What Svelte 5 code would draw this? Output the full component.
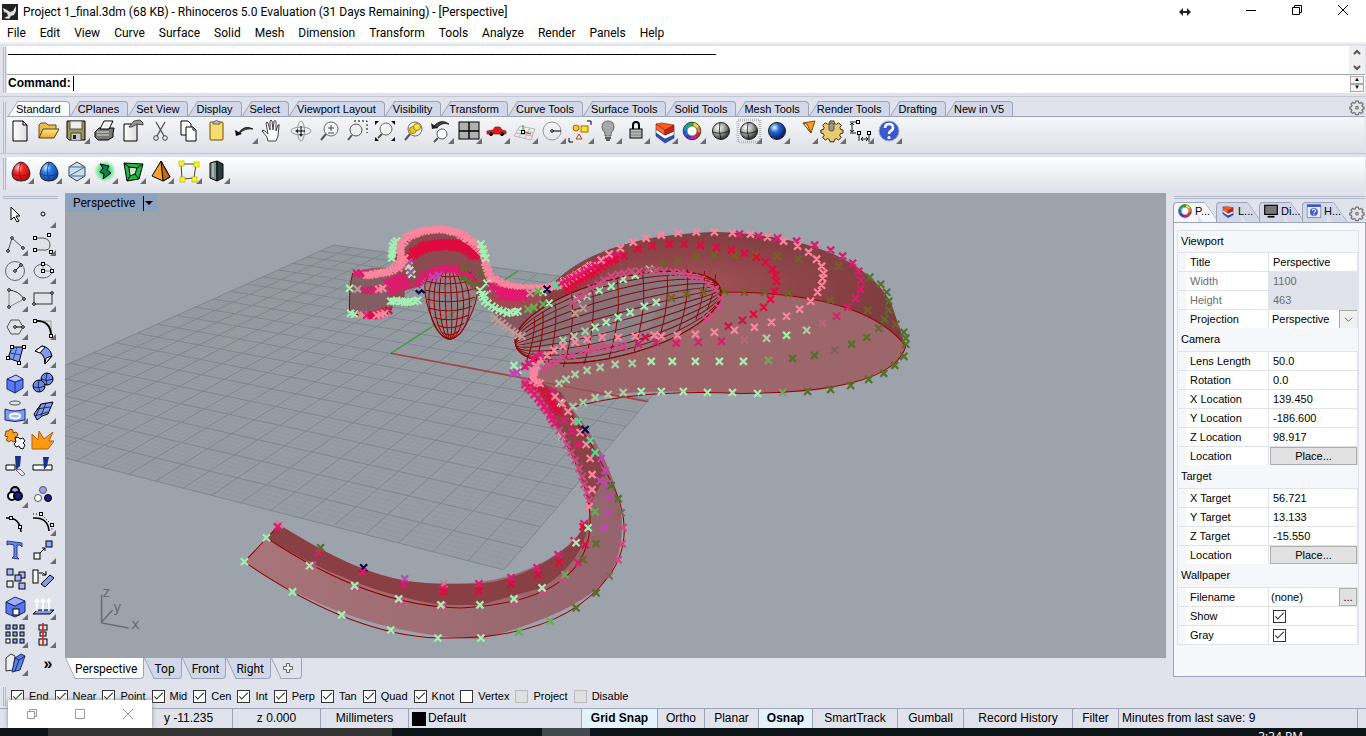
<script lang="ts">
  type Pt = [number, number];

  const menus = ['File', 'Edit', 'View', 'Curve', 'Surface', 'Solid', 'Mesh', 'Dimension', 'Transform', 'Tools', 'Analyze', 'Render', 'Panels', 'Help'];
  const toolTabs = ['Standard', 'CPlanes', 'Set View', 'Display', 'Select', 'Viewport Layout', 'Visibility', 'Transform', 'Curve Tools', 'Surface Tools', 'Solid Tools', 'Mesh Tools', 'Render Tools', 'Drafting', 'New in V5'];
  const viewTabs = ['Perspective', 'Top', 'Front', 'Right'];

  let activeTool = $state('Standard');
  let activeView = $state('Perspective');
  let command = $state('');

  let snaps = $state([
    ...['End', 'Near', 'Point', 'Mid', 'Cen', 'Int', 'Perp', 'Tan', 'Quad', 'Knot'].map((name) => ({ name, on: true, off: false })),
    { name: 'Vertex', on: false, off: false },
    { name: 'Project', on: false, off: true },
    { name: 'Disable', on: false, off: true },
  ]);

  const sections = [
    {
      title: 'Viewport',
      rows: [
        { label: 'Title', kind: 'text', value: 'Perspective' },
        { label: 'Width', kind: 'fixed', value: '1100' },
        { label: 'Height', kind: 'fixed', value: '463' },
        { label: 'Projection', kind: 'select', value: 'Perspective' },
      ],
    },
    {
      title: 'Camera',
      rows: [
        { label: 'Lens Length', kind: 'text', value: '50.0' },
        { label: 'Rotation', kind: 'text', value: '0.0' },
        { label: 'X Location', kind: 'text', value: '139.450' },
        { label: 'Y Location', kind: 'text', value: '-186.600' },
        { label: 'Z Location', kind: 'text', value: '98.917' },
        { label: 'Location', kind: 'button', value: 'Place...' },
      ],
    },
    {
      title: 'Target',
      rows: [
        { label: 'X Target', kind: 'text', value: '56.721' },
        { label: 'Y Target', kind: 'text', value: '13.133' },
        { label: 'Z Target', kind: 'text', value: '-15.550' },
        { label: 'Location', kind: 'button', value: 'Place...' },
      ],
    },
    {
      title: 'Wallpaper',
      rows: [
        { label: 'Filename', kind: 'file', value: '(none)' },
        { label: 'Show', kind: 'check', value: '' },
        { label: 'Gray', kind: 'check', value: '' },
      ],
    },
  ];

  const statusCells = [
    { text: 'Grid Snap', w: 76, on: true },
    { text: 'Ortho', w: 47, on: false },
    { text: 'Planar', w: 54, on: false },
    { text: 'Osnap', w: 54, on: true },
    { text: 'SmartTrack', w: 85, on: false },
    { text: 'Gumball', w: 66, on: false },
    { text: 'Record History', w: 109, on: false },
    { text: 'Filter', w: 46, on: false },
  ];

  // ---- icons, each on a 28 x 28 cell ----
  const h = (x: number, y: number, s = 3) => `<rect x="${x - s / 2}" y="${y - s / 2}" width="${s}" height="${s}" fill="#fff"/>`;
  const dot = (x: number, y: number) => `<circle cx="${x}" cy="${y}" r="1.3" fill="#fff"/>`;
  const p = (d: string, attrs = '') => `<path d="${d}" ${attrs}/>`;
  const lens = '<circle cx="16" cy="12" r="7" fill="#f4f4f4" stroke="#666"/><path d="M11 17l-5 6" stroke="#555" stroke-width="2"/>';
  const wheel = (cx: number, cy: number, r: number) => {
    const cols = ['#e8e020', '#f08020', '#e02020', '#c020a0', '#5030c0', '#2060e0', '#10a0b0', '#20b040'];
    let out = '';
    cols.forEach((c, i) => {
      const a = (i * Math.PI) / 4 - 1.4;
      const b = a + Math.PI / 4 + 0.05;
      out += `<path d="M${cx + r * Math.cos(a)} ${cy + r * Math.sin(a)}A${r} ${r} 0 0 1 ${cx + r * Math.cos(b)} ${cy + r * Math.sin(b)}" stroke="${c}" stroke-width="${r * 0.5}"/>`;
    });
    return out + `<circle cx="${cx}" cy="${cy}" r="${r * 0.72}" fill="#fff" stroke="#333" stroke-width=".7"/><circle cx="${cx}" cy="${cy}" r="${r * 1.26}" stroke="#222" stroke-width=".8"/>`;
  };
  const ball = (fill: string) => `<circle cx="14" cy="14" r="8.500" fill="url(#${fill})" stroke="#222"/>`;
  const meridians = p('M6 15q8 3 16-1M13 6q-2 8 1 16', 'stroke-width=".7"');
  const layers = p('M5 16l9 6 9-4v3l-9 5-9-7z', 'fill="#2850c8" stroke="#122a80" stroke-width=".6"') + p('M5 12l9 6 9-4v4l-9 4-9-6z', 'fill="#fff" stroke="#333" stroke-width=".6"') + p('M5 7v5l9 6v-5z', 'fill="#ff6a30" stroke="#7a1a10" stroke-width=".6"') + p('M14 13v5l9-4V8z', 'fill="#c8201c" stroke="#7a1a10" stroke-width=".6"') + p('M5 7l6-1 12 2-9 5z', 'fill="#ff5a20" stroke="#7a1a10" stroke-width=".6"');
  const helpBall = '<circle cx="14" cy="14" r="10" fill="#3858cc" stroke="#9aaae8"/>' + p('M10 11q0-4 4-4t4 3.500q0 2.500-2.500 3.700-1.500.8-1.500 2.800', 'stroke="#fff" stroke-width="2.600"') + '<circle cx="14" cy="20.500" r="1.600" fill="#fff" stroke="none"/>';
  const gearPath = 'M12 5h4l.5 2.500 2 .8 2.200-1.500 2.600 2.700-1.400 2.100.8 2 2.300.4v3l-2.500.6-.8 1.800 1.500 2.200-2.700 2.400-2-1.400-2 .9-.5 2.300h-4l-.5-2.300-2-.9-2.200 1.400-2.600-2.500 1.400-2.100-.8-1.900-2.400-.5v-3l2.400-.4.9-2-1.500-2.200 2.700-2.700 2.100 1.500 2-.8z';

  const standard = [
    { n: 'New', a: p('M6 4h10l4 4v16H6z', 'fill="url(#paper)"') + p('M16 4v4h4') },
    { n: 'Open', a: p('M4 21V8l2-2h5l2 2h8v4', 'fill="#e8c050" stroke="#6a5010"') + p('M4 21l4-9h16l-5 9z', 'fill="url(#gold)" stroke="#5a4208"') },
    { n: 'Save', f: 1, a: p('M4 4h18v19H6l-2-2z', 'fill="#9c9458"') + '<rect x="7" y="4" width="12" height="8" fill="#eee" stroke="#555"/>' + p('M8 23v-7h10v7', 'fill="#c8c8c8" stroke="#444"') + '<rect x="10" y="18" width="3" height="4" fill="#222" stroke="none"/>' },
    { n: 'Print', a: p('M4 15l4-4h15l-1 5v4l-5 3H7l-3-3z', 'fill="#777"') + p('M9 12l4-8h9l-4 8z', 'fill="#fff"') + p('M6 15h12M6 18h12M14 7l4 0M13 9h4', 'stroke="#ddd"') },
    { n: 'Properties', a: p('M5 7h13v17H5z', 'fill="url(#paper)"') + p('M10 10l5-6 6-1 3 3v2l-6-1-5 3z', 'fill="#999" stroke="#444"') },
    { n: 'Cut', a: p('M9 5l8 14M18 5l-8 14', 'stroke="#555" stroke-width="1.400"') + '<circle cx="9" cy="21" r="2.300" stroke="#444"/><circle cx="18" cy="21" r="2.300" stroke="#444"/>' },
    { n: 'Copy', a: p('M6 4h7l3 3v11H6z', 'fill="#fff"') + p('M11 10h7l3 3v11H11z', 'fill="#fff"') + p('M18 10v3h3') },
    { n: 'Paste', a: '<rect x="7" y="5" width="13" height="18" rx="1" fill="#f4dc70" stroke="#6a5408"/>' + p('M10 7V5q3.500-3 7 0v2z', 'fill="#bbb" stroke="#666"') },
    { n: 'Undo', f: 1, a: p('M4 13l1 6 6-2z', 'fill="#000" stroke="none"') + p('M7 17q6-10 15-5-8-1-13 4z', 'fill="#444" stroke-width=".7"') },
    { n: 'Pan', a: p('M9 24l-1-4-5-6q0-2 3 0l3 3-2-11q1-2 2 0l2 7V4q1-2 2 0l1 9 1-9q2-1 2 1l0 9 2-6q2-1 1 1l-1 10-2 5z', 'fill="#fff" stroke="#444"') },
    { n: 'Rotate', a: '<ellipse cx="14" cy="14" rx="10" ry="4" stroke="#999"/><ellipse cx="14" cy="14" rx="3.500" ry="10" stroke="#999"/>' + p('M14 9v9M10 14h8') + p('M8 14l3-2v4zM14 20l-2-3h4z', 'fill="#222" stroke="none"') },
    { n: 'Zoom', a: lens + p('M13 11h6M16 8v6M13 16h6', 'stroke="#444"') },
    { n: 'Zoom Window', a: p('M11 4h13v12', 'stroke-dasharray="2 2"') + '<circle cx="13" cy="13" r="6" fill="#eee" stroke="#555"/><path d="M9 18l-4 5" stroke="#555" stroke-width="2"/>' },
    { n: 'Zoom Extents', a: '<circle cx="15" cy="12" r="6" fill="#f4f4f4" stroke="#666"/><path d="M11 17l-4 4" stroke="#555" stroke-width="2"/>' + p('M4 8V4h4zM20 4h4v4zM24 20v4h-4zM4 20v4h4z', 'fill="#000" stroke="none"') },
    { n: 'Zoom Selected', a: lens + '<circle cx="14" cy="13" r="3.500" fill="#e8c820" stroke="#a08000"/><circle cx="18" cy="10" r="3.500" fill="#f8e040" stroke="#a08000"/>' },
    { n: 'Undo View', f: 1, a: '<circle cx="15" cy="17" r="5" fill="#fff" stroke="#555"/><path d="M11 21l-4 4" stroke="#555" stroke-width="2"/>' + p('M4 6l1 6 6-1z', 'fill="#222" stroke="none"') + p('M7 9q7-8 15-2-8-2-12 4z', 'fill="#444" stroke-width=".7"') },
    { n: '4 View', f: 1, a: '<rect x="4" y="5" width="20" height="17" fill="#b0b0b0"/>' + p('M14 5v17M4 14h20', 'stroke-width="1.400"') },
    { n: 'Set View', f: 1, a: p('M4 17v-3l6-1 2-3h5l2 3 4 1v3z', 'fill="#e01818" stroke="#a01010" stroke-width=".7"') + '<circle cx="8" cy="17" r="1.600" fill="#222"/><circle cx="19" cy="17" r="1.600" fill="#222"/>' },
    { n: 'CPlane', f: 1, a: p('M3 19l6-10 15 3-4 11zM5 16l16 3M7 13l15 3M8 20l6-10M14 21l5-10', 'stroke="#aaa" stroke-width=".8"') + p('M12 15v-7', 'stroke="#2a2"') + p('M12 15l8 2', 'stroke="#d22"') + h(12, 15) },
    { n: 'Circle', f: 1, a: '<circle cx="13" cy="14" r="9" stroke="#999"/>' + p('M13 14h9') + dot(13, 14) },
    { n: 'Select', f: 1, a: '<circle cx="9" cy="11" r="3" fill="#ffc820" stroke="#b06000"/><rect x="14" y="9" width="7" height="6" fill="#ffe820" stroke="#b06000"/>' + p('M12 17l-3 5h6z', 'stroke="#b04010"') + p('M20 4h4v4M2 21v4h4') },
    { n: 'Light', f: 1, a: p('M7 10q0-6 6-6t6 6q0 3-3 6v3h-6v-3q-3-3-3-6z', 'fill="#a8a8a8" stroke="#666"') + p('M10 21h6M11 23h4', 'stroke="#333" stroke-width="1.500"') },
    { n: 'Lock', f: 1, a: p('M10 12V8q0-3 3-3t3 3v4', 'stroke-width="2"') + '<rect x="7" y="12" width="12" height="9" fill="#bbb"/>' + p('M8 15h10M8 18h10', 'stroke="#777"') },
    { n: 'Layers', f: 1, a: layers },
    { n: 'Color', f: 1, a: wheel(13, 14, 7) },
    { n: 'Shade', a: ball('steel') + meridians },
    { n: 'Ghosted', f: 1, a: '<rect x="3" y="3" width="22" height="22" stroke="#bbb" stroke-dasharray="1 1" stroke-width="3"/>' + ball('steel') + meridians },
    { n: 'Render', f: 1, a: ball('blue') },
    { n: 'Spotlight', f: 1, a: p('M12 6l12-2-4 12z', 'fill="#ff9a20" stroke="#7a5010"') + p('M12 6l4 1 4 9z', 'fill="#fff0c0" stroke="#7a5010"') },
    { n: 'Options', f: 1, a: `<g transform="translate(-1 -1)">${p(gearPath, 'fill="#eacb70" stroke="#3a2a08"')}<rect x="11" y="7" width="5" height="8" rx="2" fill="#999" stroke="#555"/></g>` },
    { n: 'Dimension', f: 1, a: p('M3 5h9M3 16h6M5 7v7M3 8l2-2 2 2M3 13l2 2 2-2M12 16v8M22 16v9M14 22h7M16 20l-2 2 2 2M19 20l2 2-2 2', 'stroke-width=".9"') + h(11, 5) + h(12, 16) + h(22, 16) },
    { n: 'Help', f: 1, a: helpBall },
  ];

  const egg = (fill: string, line: string) => p('M14 5q7 1 9 11 0 8-9 8t-9-8q2-10 9-11z', `fill="url(#${fill})" stroke="#222"`) + p('M6 17q8 4 16 0M14 6q-4 9 1 17', `stroke="${line}" stroke-width=".7"`);
  const extras = [
    { n: 'Red', a: egg('red', '#900') },
    { n: 'Blue', a: egg('sky', '#036') },
    { n: 'Hex', a: p('M14 5l8 5v9l-8 5-8-5v-9z', 'fill="#c8e0f0" stroke="#345"') + p('M6 10h16M6 19l16-9M6 19h16', 'stroke="#567"') },
    { n: 'Glow', a: '<circle cx="14" cy="14" r="11" fill="url(#glow)" stroke="none"/>' + p('M9 7l9 2-2 4 4 3-8 6 1-5-4-2 3-4z', 'fill="#1a7a50"') },
    { n: 'Green', a: p('M5 6l19 1-4 15-12 2z', 'fill="#20b840"') + p('M10 10l8 1-2 6-5 2z', 'fill="#c8ecc8"') + p('M5 6l5 4M24 7l-6 4M20 22l-4-5M8 24l3-5') },
    { n: 'Pyramid', a: p('M14 4l9 16-7 4-11-5z', 'fill="#f8a030"') + p('M14 4l2 20 7-4z', 'fill="#c06810"') },
    { n: 'Cage', a: p('M6 7l15 0-2 14-12 1z', 'stroke="#444"') + [[6, 6], [21, 7], [19, 22], [7, 22]].map(([x, y]) => `<rect x="${x - 2}" y="${y - 2}" width="5" height="5" fill="#ff0" stroke="#b8a000" stroke-width=".6"/>`).join('') },
    { n: 'Box', a: p('M7 6l7-2v20l-7-3z', 'fill="#7a8c8e"') + p('M14 4l6 3v14l-6 3z', 'fill="#2a3c40"') + p('M10 6v14', 'stroke="#cdd"') },
  ];

  const b1 = 'fill="#7f9af0"';
  const cube = (x: number, y: number, f = '#a8b8ff') => `<rect x="${x}" y="${y}" width="6" height="6" fill="${f}"/>`;
  const side = [
    { n: 'Select', a: p('M10 6v13l3-3 3 5 2-1-3-5h4z', 'fill="#fff"') },
    { n: 'Point', f: 1, a: '<circle cx="14" cy="13" r="2" fill="#eee"/>' },
    { n: 'Polyline', f: 1, a: p('M7 22l4-13 11 10', 'stroke="#555"') + dot(7, 22) + dot(11, 9) + dot(22, 19) },
    { n: 'Curve', f: 1, a: p('M6 9h8q7 1 7 7t-7 5H6', 'stroke="#555"') + h(6, 9) + h(6, 21) + h(20, 6) + h(22, 23) },
    { n: 'Circle', f: 1, a: '<circle cx="14" cy="14" r="9.500" stroke="#666"/>' + p('M14 14l6-6') + dot(14, 14) + dot(20, 8) },
    { n: 'Ellipse', f: 1, a: '<ellipse cx="14" cy="14" rx="9" ry="7" stroke="#666"/>' + p('M14 14h9M14 14V7', 'stroke="#888"') + h(14, 14) + h(14, 7) + h(23, 14) },
    { n: 'Arc', f: 1, a: p('M8 5q10 1 15 9', 'stroke="#333"') + p('M8 22V5M8 22l15-8', 'stroke="#888"') + dot(8, 5) + dot(8, 22) + dot(23, 14) },
    { n: 'Rectangle', f: 1, a: '<rect x="5" y="8" width="18" height="11" stroke="#333"/>' + dot(5, 19) + dot(23, 8) },
    { n: 'Polygon', f: 1, a: p('M10 7h8l4 7-4 7h-8l-4-7z', 'stroke="#555"') + p('M14 14h8') + dot(14, 14) + dot(22, 14) },
    { n: 'Fillet', f: 1, a: p('M6 8h16v14', 'stroke="#999"') + p('M6 8q16-1 16 15', 'stroke-width="1.800"') + h(6, 8) + h(22, 23) },
    { n: 'Surface', f: 1, a: p('M11 6l11 0-4 15L7 17z', b1) + p('M16 6l-4 13M9 12l11 2', 'stroke="#2840a0"') + h(11, 6) + h(23, 6) + h(7, 17) + h(18, 22) },
    { n: 'Loft', f: 1, a: p('M6 10l7-5q8 1 10 10l-7 8q0-12-10-13z', b1) + p('M6 10l7-5 3 1-5 6zM17 17l6-2-7 8z', 'fill="#fff"') },
    { n: 'Box', f: 1, a: p('M6 10l8 3 8-3v9l-8 5-8-4z', 'fill="#5878f0" stroke="#182878"') + p('M6 10l9-4 7 4-8 3z', 'fill="#b8c6ff" stroke="#182878"') + p('M14 13v11', 'stroke="#182878"') },
    { n: 'Spheres', f: 1, a: '<circle cx="18" cy="10" r="6" fill="#6a88ee"/><circle cx="10" cy="17" r="6" fill="#6a88ee"/>' + p('M12 10q6 3 12 0M18 4q-2 6 0 12M4 18q6 2 12-1M10 11q-2 6 1 12', 'stroke-width=".7"') },
    { n: 'Project', f: 1, a: '<ellipse cx="14" cy="6" rx="5.500" ry="2" stroke="#555"/>' + p('M4 12q10 4 20 0v11q-10 3-20 0z', 'fill="#7f9af0" stroke="#182878"') + '<ellipse cx="14" cy="19" rx="5" ry="2.500" fill="#a8b8ff" stroke="#fff" stroke-width="2"/>' },
    { n: 'Mesh', f: 1, a: p('M5 17l7-10q6-1 12-2l-5 12q-6 1-11 6z', 'fill="#7f9af0"') + p('M8 12q6-1 13-2M6 19q6-2 13-4M17 6l-5 13M12 7l-5 12', 'stroke-width=".7"') },
    { n: 'Join', a: p('M5 6l3 0 1-2 3 1 0 3 3-1 2 2-1 2-2 1 1 4-3 1-2-2-2 2-3-2 2-3-3-1z', 'fill="#ffa020" stroke="#7a4a08"') + p('M14 13l3-1 2 2 3-1 2 3-2 2 2 2-2 4-3-1-1-2-3 1-2-3 2-2z', 'fill="#fff"') },
    { n: 'Explode', a: p('M3 24V9l6 6 1-9 5 8 9-7-4 9h5l-6 8z', 'fill="#ff9a10" stroke="#b06010"') },
    { n: 'Trim', a: p('M5 12h9v5H5z', 'fill="#fff"') + p('M14 3h6l-1 10-4 4z', 'fill="#1a2f88" stroke="none"') + p('M15 17l4-1 5 5-3 2z', 'fill="#eee" stroke="#666"') },
    { n: 'Split', a: p('M4 12h19v5H4z', 'fill="#fff"') + p('M14 4h6l-2 9-3 4z', 'fill="#1a2f88" stroke="none"') },
    { n: 'Group', f: 1, a: '<circle cx="14" cy="10" r="4" fill="#98a0f8" stroke-width="2"/><circle cx="11" cy="15" r="4" fill="#fff" stroke-width="2"/><circle cx="17" cy="15" r="4" fill="#1c1c88" stroke-width="2"/>' },
    { n: 'Ungroup', a: '<circle cx="14" cy="9" r="3.500" fill="#98a0f8" stroke="#555"/><circle cx="9" cy="17" r="3.500" fill="#fff" stroke="#555"/><circle cx="19" cy="17" r="3.500" fill="#1c1c88"/>' },
    { n: 'Edit Points', a: p('M5 9q14-1 15 14', 'stroke-width="1.600"') + h(10, 9) + h(19, 18) },
    { n: 'Control Points', f: 1, a: p('M4 9q15-1 16 13', 'stroke-width="1.600"') + p('M4 5h8l11 11v6', 'stroke-dasharray="1 2"') + h(12, 5) + h(23, 16) },
    { n: 'Text', a: p('M6 4l15 2v4l-2-2-3 0v12l2 2-7-1 2-2V8l-5-1-2 1z', 'fill="#6a88e8" stroke="#223a88"') },
    { n: 'Move', f: 1, a: '<rect x="5" y="16" width="6" height="6" fill="#eee"/><rect x="17" y="4" width="6" height="6" fill="#8ea6ff"/>' + p('M11 16l5-5M13 11h3v3') },
    { n: 'Copy', a: cube(6, 4) + cube(18, 7) + cube(14, 10) + cube(6, 16, '#eee') + cube(18, 18) },
    { n: 'Rotate', a: '<rect x="4" y="5" width="5" height="13" fill="#fff"/>' + p('M12 19l9-9 4 3-9 9z', 'fill="#7f9af0"') + p('M10 8q4-1 7 2M17 6v4h-4') },
    { n: 'Block', f: 1, a: p('M5 9l9 4 10-5v11l-10 5-9-4z', 'fill="#5878e8" stroke="#182878"') + p('M5 9l9-5 10 4-10 5z', 'fill="#9ab0ff" stroke="#182878"') + '<rect x="12" y="16" width="6" height="6" fill="#fff"/>' },
    { n: 'Extrude', f: 1, a: p('M4 21l4-4h17l-4 4z', 'fill="#7f9af0"') + p('M8 18V7M14 18V7M20 18V7M6 9l2-3 2 3M12 9l2-3 2 3M18 9l2-3 2 3', 'stroke="#fff" stroke-width="1.600"') },
    { n: 'Array', f: 1, a: [5, 12, 19].map((y) => [5, 12, 19].map((x) => `<rect x="${x}" y="${y - 1}" width="4" height="4" fill="${x === 5 && y === 19 ? '#fff' : '#8ea6ff'}"/>`).join('')).join('') },
    { n: 'Align', f: 1, a: '<rect x="10" y="4" width="8" height="5" fill="#ddd"/><rect x="11" y="11" width="6" height="4" fill="#ddd"/><rect x="10" y="18" width="8" height="6" fill="#ddd"/>' + p('M14 2v22', 'stroke="#d03030" stroke-width="1.800"') },
    { n: 'Bend', f: 1, a: p('M5 9l5-4 4 2-2 14-7 1z', 'fill="#eee" stroke="#333"') + p('M14 9l6-4 4 2-5 14-8 2z', 'fill="#5f7fe0" stroke="#182878"') + p('M14 9l4 2 6-4M18 11l-4 11', 'stroke="#182878"') },
  ];

  // ---- construction plane: maps u,v in 0..1 onto the perspective quad ----
  const quad: Pt[] = [[-66, 424], [503, 569], [732, 300], [333, 245]];
  function project(u: number, v: number): Pt {
    const [[x0, y0], [x1, y1], [x2, y2], [x3, y3]] = quad;
    const dx1 = x1 - x2, dx2 = x3 - x2, sx = x0 - x1 + x2 - x3;
    const dy1 = y1 - y2, dy2 = y3 - y2, sy = y0 - y1 + y2 - y3;
    const det = dx1 * dy2 - dx2 * dy1;
    const g = (sx * dy2 - dx2 * sy) / det;
    const k = (dx1 * sy - sx * dy1) / det;
    const w = g * u + k * v + 1;
    return [
      ((x1 - x0 + g * x1) * u + (x3 - x0 + k * x3) * v + x0) / w,
      ((y1 - y0 + g * y1) * u + (y3 - y0 + k * y3) * v + y0) / w,
    ];
  }
  function gridLines(n: number) {
    let d = '';
    for (let i = 0; i <= n; i++) {
      const t = i / n;
      d += `M${project(t, 0)}L${project(t, 1)}M${project(0, t)}L${project(1, t)}`;
    }
    return d;
  }
  const minorGrid = gridLines(100);
  const majorGrid = gridLines(20);

  // ---- control point crosses ----
  const parse = (s: string): Pt[] => s.split(' ').map((q) => q.split(',').map(Number) as Pt);
  const cross = ([x, y]: Pt) => `M${x - 3.5} ${y - 3.5}l7 7m0 -7l-7 7`;
  const pts = (s: string) => parse(s).map(cross).join('');
  function along(s: string, step: number) {
    const line = parse(s);
    let d = '';
    for (let i = 1; i < line.length; i++) {
      const [ax, ay] = line[i - 1];
      const [bx, by] = line[i];
      const n = Math.max(1, Math.round(Math.hypot(bx - ax, by - ay) / step));
      for (let j = 0; j < n; j++) d += cross([Math.round(ax + ((bx - ax) * j) / n), Math.round(ay + ((by - ay) * j) / n)]);
    }
    return d;
  }

  const pink = '#ff859f', crimson = '#e0083c', magenta = '#e0186e', mint = '#a2f0b2', sage = '#a6cfa6', olive = '#55702a', rose = '#cf4a80', purple = '#c044b4', green = '#66ad54', navy = '#05054a', teal = '#52dc98', tan = '#bf9a96';

  const marks = [
    // far side of the shell
    { c: '#6f6424', d: pts('662,263 677,260 695,257 713,255 733,255 754,255 776,256 797,259 837,266 670,298 685,294 702,292 723,291 743,292 763,292 787,293 829,300 866,310 894,324') },
    { c: mint, d: pts('634,275 622,279 610,286 598,290 655,302 643,306 629,312 617,317 605,322 594,327') },
    { c: sage, d: pts('586,296 576,299 584,331 573,336 562,340 648,269') },
    // left bracket and hump
    { c: mint, d: along('349,288 352,288', 4) + along('391,258 392,246 398,238', 4) + along('350,313 358,314', 4) + along('390,301 396,300 404,302 420,300', 3) + along('408,266 412,278', 4) },
    { c: tan, d: along('357,289 362,290', 4) + along('360,315 366,315', 4) },
    { c: magenta, d: along('356,273 373,274', 4) + along('364,290 380,289', 4) + along('366,315 380,315', 4) + along('386,283 398,278 407,278', 3) + along('390,291 398,286 410,284', 3) },
    { c: crimson, d: along('372,315 392,309', 4) + along('412,252 425,245 440,243 455,243 470,248 478,256', 3) + along('410,256 425,248 445,246 462,248 476,258', 3) },
    { c: magenta, d: along('416,284 426,274 440,269 455,269 468,276 476,288', 3) },
    { c: purple, d: pts('432,277 438,275 408,262 410,272') },
    { c: olive, d: pts('462,278 468,281 474,285 481,270 484,280 463,268') },
    { c: pink, d: along('366,275 380,273 392,270 400,262 400,245 408,236 422,231 440,229 458,233 472,242 482,252 486,268 490,278 505,285 520,288 545,288 560,284 580,272 594,263', 3) },
    { c: pink, d: along('378,289 386,286', 4) + along('398,268 405,255', 3) + along('376,315 388,312', 4) },
    { c: mint, d: along('480,244 486,262', 5) + along('479,290 484,301 494,308 506,313 521,310', 4) + pts('486,283 492,288 484,295 548,303 542,292 563,281') },
    { c: magenta, d: along('490,286 500,291 515,293 530,293', 3) + along('500,296 515,297 526,295', 3) + along('560,283 575,276 590,268 605,260 623,253', 4) },
    { c: tan, d: along('494,318 504,326 514,333 524,338', 4) + pts('529,293 582,308 574,313') },
    { c: green, d: pts('527,309 537,291 542,304 533,307') },
    { c: teal, d: pts('555,285') },
    { c: navy, d: pts('546,289') + 'M415 290l3 3l3-3l3 3' },
    // shell arcs
    { c: rose, d: along('572,302 590,288 610,276 630,271 655,270 680,273 700,279 714,289 719,298 717,307 710,315 700,322', 8) },
    { c: magenta, d: pts('738,234 757,236 776,238 795,241 813,245 829,250 841,256 851,263 857,271 859,280 859,289 854,298 846,307 835,316 720,341 697,342 675,343 655,342 637,344 622,346') },
    { c: crimson, d: pts('614,259 623,256 637,249 651,246 668,244 683,244 699,245 715,247 730,250 743,253 755,257 764,262 771,269 774,275 775,281 773,291 769,299 762,307 752,314 741,320 727,326 644,337') + along('566,290 576,282 590,274 604,264 616,258', 4) },
    { c: pink, d: pts('600,260 608,254 619,248 632,242 645,238 660,235 677,233 695,232 713,232 731,233 749,234 766,237 782,241 796,246 807,252 815,259 820,266 822,273 821,278 820,285 816,292 809,301 798,309 785,316 770,322 753,327 733,330 713,332 694,334 676,335 660,336 653,335 634,336 617,337 601,337 586,339 574,342 562,346 553,350 546,355 539,359 535,365 533,370 532,375') },
    { c: rose, d: along('622,346 600,347 580,352 562,357 548,364 538,372', 8) },
    { c: '#b9687c', d: pts('821,323 743,340') },
    { c: sage, d: pts('805,330 765,338 631,363 614,364 599,367 586,370 574,374 565,379 558,383 622,392 607,394 594,397 582,402 572,406') },
    { c: mint, d: pts('785,335 742,361 718,361 694,361 671,361 650,361 756,393 731,392 706,392 682,391 660,391 640,391') },
    { c: green, d: pts('767,360 781,392') },
    { c: '#7e6262', d: pts('833,350') },
    { c: olive, d: pts('868,277 879,284 885,292 887,301 887,310 883,319 877,328 865,337 850,344 813,355 791,358 902,332 904,338 904,344 902,356 893,365 882,373 867,379 849,385 829,389 806,391') },
    // spine, from the shell down to the ribbon
    { c: mint, d: pts('513,365 517,370 561,436 559,402') },
    { c: purple, d: pts('512,373 516,372 600,458 604,470 607,483 608,497 607,512 599,480 603,527') },
    { c: rose, d: along('524,381 534,394 544,408 553,423 562,436 570,452 578,468 583,484 588,500 587,512', 8) },
    { c: magenta, d: along('524,366 532,359 542,351', 5) + along('524,384 530,390 540,402 549,414 556,428', 5) + pts('571,431 563,420 577,444 552,391 557,400') },
    { c: crimson, d: along('531,381 540,388 548,397 553,406 560,414', 4) },
    { c: pink, d: along('533,372 532,380 543,385', 4) + pts('588,506 591,489 591,474 589,458 585,444 579,432 573,421 567,411 561,403 554,396') },
    { c: teal, d: pts('577,421 589,440 594,452') },
    { c: navy, d: pts('584,429') },
    // ribbon
    { c: '#c97a90', d: pts('279,524 443,583') },
    { c: olive, d: pts('320,547 575,607 595,592 582,559 610,485 617,498 595,543') },
    { c: navy, d: pts('363,567') },
    { c: purple, d: pts('404,578') },
    { c: rose, d: along('622,527 621,543 617,559', 16) + pts('617,559 312,564 356,587 400,600 442,605 514,601 542,590 562,578') },
    { c: magenta, d: pts('277,526 318,552 362,571 403,584 442,588 478,583 510,577 536,567 557,554 573,540 583,523 577,562') },
    { c: crimson, d: pts('443,591 478,590 510,583 537,574 558,562 582,526 584,544') },
    { c: mint, d: pts('266,537 309,565 354,585 398,598 440,604 479,604 513,598 541,587 587,527 244,561 292,591 341,614 390,629 437,637 480,637 575,542') },
    { c: green, d: pts('518,631 549,620 564,574 594,511') },
    { c: '#846656', d: pts('608,575 620,512') },
  ];

  // longitudes and ribs of the two wire cages
  const longs = [38, 33, 27, 20, 12, 4];
  const ribs = [-90, -80, -66, -48, -26, 0, 26, 50, 70, 86, 96];
</script>

<div class="app">
  <header class="titlebar">
    <svg class="logo" viewBox="0 0 16 16"><rect width="16" height="16" fill="#222" /><path d="M1 4l4 2 3 2 3-1 3-5 0 5-2 4-3 1-2 3-5-1 4-2-1-3-3-1z" fill="#ddd" /></svg>
    <h1>Project 1_final.3dm (68 KB) - Rhinoceros 5.0 Evaluation (31 Days Remaining) - [Perspective]</h1>
    <svg class="resize" viewBox="0 0 12 8"><path d="M0 4l4-4v3h4V0l4 4-4 4V5H4v3z" fill="#222" /></svg>
    <button class="win" aria-label="Minimize"><svg viewBox="0 0 12 12"><path d="M1 6.500h10" /></svg></button>
    <button class="win" aria-label="Restore"><svg viewBox="0 0 12 12"><path d="M1.500 3.500h7v7h-7zM3.500 3.500v-2h7v7h-2" /></svg></button>
    <button class="win" aria-label="Close"><svg viewBox="0 0 12 12"><path d="M1 1l10 10M11 1L1 11" /></svg></button>
  </header>

  <nav class="menu">
    {#each menus as m}<button>{m}</button>{/each}
  </nav>

  <section class="command">
    <div class="grip"></div>
    <div class="console">
      <div class="history"><span>{'—'.repeat(59)}</span><span class="scroll"><svg viewBox="0 0 8 28"><path d="M1 8l3-3 3 3M1 20l3 3 3-3" /></svg></span></div>
      <div class="prompt">
        <label for="cmd">Command:</label><i class="caret"></i>
        <input id="cmd" bind:value={command} />
        <span class="spin"><button aria-label="Previous">▲</button><button aria-label="Next">▼</button></span>
      </div>
    </div>
  </section>

  <section class="toolbar">
    <div class="grip"></div>
    <div class="bar">
      <div class="tooltabs">
        {#each toolTabs as t}
          <button class:active={activeTool === t} onclick={() => (activeTool = t)}><span>{t}</span></button>
        {/each}
        <svg class="gear" viewBox="0 0 28 28"><path d={gearPath} /><circle cx="14" cy="15" r="2" /></svg>
      </div>
      <div class="icons first">
        {#each standard as t}{@render tool(t)}{/each}
      </div>
    </div>
  </section>

  <section class="toolbar second">
    <div class="grip"></div>
    <div class="icons">
      {#each extras as t}{@render tool({ ...t, f: 1 })}{/each}
    </div>
  </section>

  <main>
    <aside class="side">
      <div class="hgrip"></div>
      <div class="palette">
        {#each side as t}{@render tool(t)}{/each}
        <button class="more" aria-label="More tools">»</button>
      </div>
    </aside>

    <div class="center">
      <div class="viewport">
        <svg class="scene" viewBox="65 193 1101 464" preserveAspectRatio="xMinYMin slice">
          <defs>
            <linearGradient id="paper"><stop offset="0" stop-color="#fff" /><stop offset="1" stop-color="#ddd" /></linearGradient>
            <linearGradient id="gold" x2="0" y2="1"><stop offset="0" stop-color="#ffe9a0" /><stop offset="1" stop-color="#e8a820" /></linearGradient>
            <radialGradient id="steel" cx=".35" cy=".3" r=".7"><stop offset="0" stop-color="#fff" /><stop offset=".5" stop-color="#aaa" /><stop offset="1" stop-color="#333" /></radialGradient>
            <radialGradient id="blue" cx=".35" cy=".3" r=".7"><stop offset="0" stop-color="#dff" /><stop offset=".4" stop-color="#2868d8" /><stop offset="1" stop-color="#061858" /></radialGradient>
            <radialGradient id="sky" cx=".35" cy=".3" r=".8"><stop offset="0" stop-color="#cef" /><stop offset=".35" stop-color="#2a7ae8" /><stop offset="1" stop-color="#0a3a90" /></radialGradient>
            <radialGradient id="red" cx=".35" cy=".3" r=".8"><stop offset="0" stop-color="#fcc" /><stop offset=".35" stop-color="#f42828" /><stop offset="1" stop-color="#b00808" /></radialGradient>
            <radialGradient id="glow"><stop offset=".4" stop-color="#30e070" /><stop offset="1" stop-color="#30e070" stop-opacity="0" /></radialGradient>
            <radialGradient id="dome" cx=".45" cy=".45"><stop offset="0" stop-color="#a35358" /><stop offset=".5" stop-color="#8f4549" /><stop offset="1" stop-color="#7f3d41" /></radialGradient>
            <linearGradient id="ribbon"><stop offset="0" stop-color="#a9747a" /><stop offset="1" stop-color="#94646c" /></linearGradient>
          </defs>

          <polygon points={quad.map((q) => q.join(',')).join(' ')} fill="#979da4" />
          <path d={minorGrid} fill="none" stroke="#8e949b" stroke-width=".4" />
          <path d={majorGrid} fill="none" stroke="#7e848b" stroke-width=".9" />
          <path d="M390 353L517 271" stroke="#4a9a50" stroke-width="1.500" />
          <path d="M390 353L647 401" stroke="#a34444" stroke-width="1.500" />

          <!-- bracket and hump -->
          <path d="M352 273q20-8 45-4l-6 40q-25 8-42 4 0-25 3-40z" fill="#835f64" />
          <path d="M388 284l16-8v22l-14 4z" fill="#8b4b50" />
          <path d="M392 270q2-36 45-40 46 2 50 45l-6 24-6-6q-4-24-28-27-22 0-28 20l-28 8z" fill="#8b4b50" />
          <path d="M352 273q-4 16-3 40M349 313q25 6 42-4" fill="none" stroke="#900" />
          <path d="M484 278q30 18 66 11l45-28-10 28-58 52q-30-16-46-46z" fill="#86585d" />
          <path d="M488 285q30 16 62 7l-20 16q-24 4-40-6z" fill="#a04a50" />

          <!-- shell -->
          <path d="M545 291Q590 236 713 232Q850 236 889 302L904 348Q890 380 806 391L740 393Q640 388 596 396L570 407L532 378L560 345L650 342Q640 300 700 292Z" fill="#9c666b" />
          <path d="M545 291Q590 236 713 232Q850 236 889 302L904 346Q860 292 723 291Q650 294 580 336L520 352Q528 316 545 291Z" fill="url(#dome)" />
          <path d="M700 292Q860 288 904 346Q890 392 740 393Q640 388 570 407" fill="none" stroke="#900" />
          <path d="M532 380L645 401" stroke="#a34444" />

          <!-- wire ellipsoid -->
          <g transform="translate(617 317) rotate(-15)" fill="none" stroke="#920505" stroke-width="1">
            <ellipse rx="106" ry="38" fill="#848086" fill-opacity=".8" />
            {#each longs as ry}<ellipse rx="106" {ry} />{/each}
            {#each ribs as x}
              {@const r = 38 * Math.sqrt(1 - (x / 106) ** 2)}
              <path d="M{x + 9} {-r}Q{x + 4} 0 {x - 20 * (r / 38)} {r}" />
            {/each}
          </g>

          <!-- wire egg -->
          <g fill="none" stroke="#920505" stroke-width="1">
            <path d="M449 339C436 339 424 304 424 286Q426 267 447 267Q474 267 477 288C476 306 462 338 449 339Z" fill="#8f6a70" fill-opacity=".5" />
            {#each [-28, -21, -14, -6, 2, 10, 18, 26] as dx}<path d="M447 267C{448 + dx} 268 {451 + dx} 334 449 339" />{/each}
            {#each [274, 281, 290, 299, 308, 317, 325, 332] as y, i}
              {@const w = [21, 25, 25, 24, 21, 17, 13, 8][i]}
              <path d="M{450 - w} {y}q{w} 6 {w * 2} -2" />
            {/each}
          </g>

          <!-- spine and ribbon -->
          <path d="M528 382L570 407Q606 450 617 498Q628 540 608 575Q580 612 480 638Q350 634 244 561L279 524Q330 556 363 568Q400 583 443 583Q520 585 573 540Q592 522 588 500Q580 465 560 435Z" fill="url(#ribbon)" />
          <path d="M532 378L560 392Q590 440 604 475L588 506Q582 465 556 428Z" fill="#8a4148" />
          <path d="M279 524Q330 556 363 568Q400 583 443 583L478 583Q530 578 573 540L587 520Q584 560 541 587L479 604L440 604Q350 590 266 537Z" fill="#893f44" />
          <path d="M279 524L244 561Q350 634 437 637Q560 640 608 575Q640 530 604 470Q590 440 570 415M266 537Q370 606 460 607Q600 600 588 506Q580 460 540 402" fill="none" stroke="#900" />

          {#each marks as m}<path d={m.d} fill="none" stroke={m.c} stroke-width="2.200" />{/each}

          <g fill="none" stroke="#666c72" stroke-width="1.500"><path d="M101.500 594v28l27 5M101.500 621l11-12" /></g>
          <g class="axis"><text x="102" y="596">z</text><text x="113" y="611">y</text><text x="131" y="628">x</text></g>
        </svg>
        <button class="viewname"><span>Perspective</span><b></b></button>
      </div>
      <div class="viewtabs">
        {#each viewTabs as t}
          <button class:active={activeView === t} onclick={() => (activeView = t)}><span>{t}</span></button>
        {/each}
        <button class="plus" aria-label="Add viewport"><svg viewBox="0 0 10 10"><path d="M3.500.5h3v3h3v3h-3v3h-3v-3h-3v-3h3z" /></svg></button>
      </div>
    </div>

    <aside class="panel">
      <div class="hgrip"></div>
      <div class="paneltabs">
        <button class="active"><svg viewBox="0 0 28 28">{@html wheel(14, 14, 9)}</svg><span>P...</span></button>
        <button><svg viewBox="0 0 28 28" stroke="#000">{@html layers}</svg><span>L...</span></button>
        <button><svg viewBox="0 0 28 28"><rect x="3" y="4" width="22" height="16" fill="#777" stroke="#000" stroke-width="2" /><path d="M8 24h12" stroke="#000" stroke-width="3" /></svg><span>Di...</span></button>
        <button><svg viewBox="0 0 28 28" fill="none"><rect x="2" y="3" width="24" height="22" fill="#eef" stroke="#4a5a90" /><path d="M2 5h24" stroke="#3858cc" stroke-width="4" /><g transform="translate(4 6) scale(.7)">{@html helpBall}</g></svg><span>H...</span></button>
        <svg class="gear" viewBox="0 0 28 28"><path d={gearPath} /><circle cx="14" cy="15" r="2" /></svg>
      </div>
      <div class="panelbody">
        <table>
          <tbody>
            {#each sections as s}
              <tr class="head"><th colspan="3">{s.title}</th></tr>
              {#each s.rows as r, i}
                {@const id = `${s.title}-${i}`}
                <tr class:fixed={r.kind === 'fixed'}>
                  <td class="indent"></td>
                  <td class="name"><label for={id}>{r.label}</label></td>
                  <td class="value">
                    {#if r.kind === 'select'}
                      <span class="pick"><select {id}><option>{r.value}</option><option>Parallel</option></select><svg viewBox="0 0 10 6"><path d="M1 1l4 4 4-4" /></svg></span>
                    {:else if r.kind === 'button'}
                      <button {id} class="place">{r.value}</button>
                    {:else if r.kind === 'check'}
                      <input {id} type="checkbox" checked />
                    {:else if r.kind === 'file'}
                      <span class="file"><input {id} value={r.value} /><button aria-label="Browse">...</button></span>
                    {:else}
                      <input {id} value={r.value} disabled={r.kind === 'fixed'} />
                    {/if}
                  </td>
                </tr>
              {/each}
            {/each}
          </tbody>
        </table>
      </div>
    </aside>
  </main>

  <section class="osnap">
    <div class="grip"></div>
    {#each snaps as s}
      <label><input type="checkbox" bind:checked={s.on} disabled={s.off} /><span>{s.name}</span></label>
    {/each}
  </section>

  <footer class="status">
    <span class="cell cover"></span>
    <span class="cell coord">y -11.235</span>
    <span class="cell unit">z 0.000</span>
    <span class="cell unit">Millimeters</span>
    <span class="cell layer"><i></i>Default</span>
    {#each statusCells as c}
      <button class="cell" class:on={c.on} style="flex-basis: {c.w}px">{c.text}</button>
    {/each}
    <span class="cell save">Minutes from last save: 9</span>
    <div class="minimized">
      <button aria-label="Restore window"><svg viewBox="0 0 12 12"><path d="M1.500 3.500h7v7h-7zM3.500 3.500v-2h7v7h-2" /></svg></button>
      <button aria-label="Maximize window"><svg viewBox="0 0 12 12"><path d="M1.500 1.500h9v9h-9z" /></svg></button>
      <button aria-label="Close window"><svg viewBox="0 0 12 12"><path d="M1 1l10 10M11 1L1 11" /></svg></button>
    </div>
  </footer>

  <div class="taskbar"><i class="search"></i><i class="task"></i><time>3:34 PM</time></div>
</div>

{#snippet tool(t: { n: string; a: string; f?: number })}
  <button class="tool" aria-label={t.n}>
    <svg viewBox="0 0 28 28" fill="none" stroke="#000">
      {@html t.a}
      {#if t.f}<path d="M27 21v6h-6z" fill="#6c6c70" stroke="none" />{/if}
    </svg>
  </button>
{/snippet}

<style>
  :global(body) {
    margin: 0;
  }

  .app {
    display: flex;
    flex-direction: column;
    height: 100vh;
    overflow: hidden;
    background: #e0e3eb;
    color: #000;
    font: 11px/13px 'Liberation Sans', Arial, sans-serif;
  }

  button,
  input,
  select {
    font: inherit;
    color: inherit;
    border: 0;
    padding: 0;
    margin: 0;
    background: none;
    border-radius: 0;
    white-space: nowrap;
  }

  .titlebar {
    display: flex;
    align-items: center;
    height: 23px;
    background: #fff;
  }

  .logo {
    width: 16px;
    height: 16px;
    margin: 0 5px 0 2px;
  }

  h1 {
    flex: 1;
    margin: 0;
    font: 12px/16px Roboto, 'Noto Sans', sans-serif;
    white-space: nowrap;
  }

  .resize {
    width: 12px;
    height: 8px;
    margin-right: 37px;
  }

  .win {
    width: 46px;
    height: 22px;
  }

  .win svg {
    width: 12px;
    height: 12px;
    fill: none;
    stroke: #000;
  }

  .menu {
    display: flex;
    height: 18px;
    padding-bottom: 1px;
    background: #fff;
    border-bottom: 2px solid #f0f0f0;
    font: 12px/20px Roboto, 'Noto Sans', sans-serif;
  }

  .menu button {
    padding: 0 7px;
  }

  .grip {
    flex: none;
    width: 1px;
    margin: 1px 1px 0 3px;
    border-left: 1px solid #b4bccb;
    border-right: 1px solid #b4bccb;
  }

  .command {
    display: flex;
    height: 47px;
    padding: 2px 1px 3px 0;
    border-bottom: 1px solid #c2c8d4;
  }

  .console {
    flex: 1;
    background: #fff;
  }

  .history {
    display: flex;
    justify-content: space-between;
    height: 28px;
    overflow: hidden;
    padding-left: 1px;
    border-bottom: 1px solid #9ba4b3;
    font-size: 12px;
    line-height: 16px;
  }

  .scroll {
    width: 16px;
    background: #f0f0f0;
  }

  .scroll svg {
    display: block;
    height: 28px;
    margin: 0 auto;
    fill: none;
    stroke: #555;
    stroke-width: 2;
  }

  .prompt {
    display: flex;
    align-items: center;
    height: 17px;
    padding: 0 1px;
  }

  .prompt label {
    font-size: 12px;
    font-weight: bold;
  }

  .caret {
    width: 1px;
    height: 15px;
    margin-left: 2px;
    background: #000;
  }

  .prompt input {
    flex: 1;
    outline: none;
  }

  .spin {
    display: flex;
    flex-direction: column;
  }

  .spin button {
    width: 14px;
    height: 8px;
    border: 1px solid #aaa;
    background: #f4f4f4;
    font-size: 6px;
    line-height: 5px;
  }

  .toolbar {
    display: flex;
    height: 52px;
    padding: 4px 1px 0 0;
    border-bottom: 1px solid #c2c8d4;
  }

  .bar {
    flex: 1;
    display: flex;
    flex-direction: column;
  }

  .tooltabs {
    display: flex;
    height: 15px;
    padding-left: 1px;
    border-bottom: 1px solid #9ba5b7;
  }

  .tooltabs button {
    position: relative;
    padding: 1px 9px 0 8px;
    --tab: #d2d8e9;
  }

  .tooltabs button.active {
    --tab: #fafbfc;
    z-index: 1;
  }

  .tooltabs button span,
  .viewtabs button span,
  .paneltabs button span {
    position: relative;
  }

  .tooltabs button::before,
  .viewtabs button::before {
    content: '';
    position: absolute;
    inset: 0 50% 0 0;
    background: var(--tab);
    border: 1px solid #9ba5b7;
    border-width: 1px 0 0 1px;
    transform: skewX(-32deg);
    transform-origin: bottom left;
  }

  .tooltabs button::after,
  .viewtabs button::after {
    content: '';
    position: absolute;
    inset: 0 0 0 14px;
    background: var(--tab);
    border: 1px solid #9ba5b7;
    border-width: 1px 1px 0 0;
    border-radius: 0 4px 0 0;
  }

  .tooltabs button span,
  .viewtabs button span {
    z-index: 1;
  }

  .gear {
    width: 18px;
    height: 18px;
    margin: -3px -1px 0 auto;
    fill: #e4e6ec;
    stroke: #777;
    stroke-width: 2;
  }

  .icons {
    flex: 1;
    display: flex;
    align-items: flex-start;
    background: linear-gradient(#fff, #e0e3ea);
  }

  .icons.first {
    background: linear-gradient(#f5f6f8, #dde0e8);
  }

  .second {
    height: 33px;
    padding: 3px 1px 0 0;
    border: 0;
  }

  .tool {
    width: 28px;
    height: 28px;
  }

  .tool svg {
    display: block;
    width: 28px;
    height: 28px;
  }

  main {
    flex: 1;
    display: flex;
    min-height: 0;
    padding-top: 3px;
  }

  .side {
    width: 64px;
  }

  .hgrip {
    height: 1px;
    margin: 3px 6px 2px 3px;
    border: 1px solid #b4bccb;
    border-width: 1px 0;
  }

  .palette {
    display: grid;
    grid-template-columns: 28px 28px;
    padding-left: 1px;
  }

  .more {
    font-size: 16px;
    font-weight: bold;
    padding-left: 10px;
  }

  .center {
    flex: 1;
    display: flex;
    flex-direction: column;
    min-width: 0;
    padding-left: 1px;
  }

  .viewport {
    flex: 1;
    position: relative;
    min-height: 0;
    background: #9ca3ab;
    overflow: hidden;
  }

  .scene {
    display: block;
    width: 100%;
    height: 100%;
  }

  .axis {
    font: 14px 'DejaVu Sans Mono', monospace;
    fill: #666c72;
  }

  .viewname {
    position: absolute;
    left: 0;
    top: 1px;
    display: flex;
    align-items: center;
    height: 18px;
    padding: 0 4px 0 8px;
    background: #8ba3c0;
    font: 12px/18px Roboto, 'Noto Sans', sans-serif;
  }

  .viewname span {
    padding-right: 8px;
  }

  .viewname b {
    display: flex;
    align-items: center;
    height: 15px;
    border-left: 1px solid #000;
  }

  .viewname b::after {
    content: '';
    margin-left: 1px;
    border: 4px solid transparent;
    border-top-color: #000;
    border-bottom: 0;
  }

  .viewtabs {
    display: flex;
    height: 28px;
    align-items: flex-start;
    font: 12px/20px Roboto, 'Noto Sans', sans-serif;
  }

  .viewtabs button {
    position: relative;
    height: 21px;
    padding: 0 7px 0 10px;
    --tab: #d2d8e9;
  }

  .viewtabs button.active {
    --tab: #fff;
  }

  .viewtabs button::before {
    border-width: 0 0 1px 1px;
    transform: skewX(25deg);
    transform-origin: top left;
  }

  .viewtabs button::after {
    border-width: 0 1px 1px 0;
    border-radius: 0 0 4px 0;
  }

  .viewtabs .plus {
    width: 31px;
    --tab: #e0e3eb;
  }

  .plus svg {
    position: relative;
    z-index: 1;
    width: 10px;
    height: 10px;
    fill: #eee;
    stroke: #666;
  }

  .panel {
    display: flex;
    flex-direction: column;
    width: 193px;
    margin: 0 0 9px 7px;
  }

  .panel .hgrip {
    margin: 3px 1px 3px;
  }

  .paneltabs {
    display: flex;
    height: 20px;
  }

  .paneltabs button {
    position: relative;
    display: flex;
    align-items: center;
    width: 43px;
    padding: 0 0 2px 4px;
  }

  .paneltabs button::before,
  .paneltabs button::after {
    content: '';
    position: absolute;
    top: 0;
    bottom: 0;
    left: 0;
    width: 24px;
    background: #d2d8e9;
    border: 1px solid #9ba5b7;
    border-width: 1px 0 0 1px;
    border-radius: 4px 0 0 0;
  }

  .paneltabs button::after {
    left: 16px;
    width: 15px;
    border-width: 1px 1px 0 0;
    border-radius: 0 2px 0 0;
    transform: skewX(35deg);
    transform-origin: top right;
  }

  .paneltabs .active::before,
  .paneltabs .active::after {
    background: #f6f7fa;
  }

  .paneltabs button svg,
  .paneltabs button span {
    position: relative;
    z-index: 1;
  }

  .paneltabs button svg {
    width: 16px;
    height: 16px;
    margin-right: 2px;
    fill: none;
  }

  .paneltabs .gear {
    margin: 2px 0 0 auto;
  }

  .panelbody {
    flex: 1;
    padding: 7px 6px 0 3px;
    border: 1px solid #9ba5b7;
    background: #f6f7fa;
  }

  table {
    display: block;
    border: 1px solid #e0e3eb;
  }

  tbody {
    display: block;
  }

  tr {
    display: grid;
    grid-template-columns: 8px 83px 1fr;
  }

  .head {
    display: block;
  }

  .head th {
    display: flex;
    align-items: center;
    height: 23px;
    padding: 0 0 0 3px;
    font-weight: normal;
  }

  .head:first-child th {
    height: 21px;
  }

  td {
    box-sizing: border-box;
    display: flex;
    align-items: center;
    height: 19px;
    min-width: 0;
    padding: 0;
    background: #fff;
    border: 0 solid #e0e3eb;
    border-width: 1px 1px 0 0;
  }

  .indent {
    background: #f6f7fa;
    border-right: 0;
  }

  .name {
    padding-left: 4px;
  }

  .fixed .name {
    color: #6d6d6d;
  }

  .fixed .value {
    background: #e0e3eb;
    color: #6d6d6d;
  }

  .value input:not([type='checkbox']) {
    width: 100%;
    min-width: 0;
    padding-left: 4px;
  }

  .value input[type='checkbox'] {
    margin-left: 4px;
  }

  .pick,
  .file {
    display: flex;
    width: 100%;
    height: 18px;
    position: relative;
  }

  .pick select {
    width: 100%;
    padding-left: 3px;
    appearance: none;
    outline: none;
  }

  .pick svg {
    position: absolute;
    right: 0;
    top: 0;
    width: 9px;
    height: 17px;
    padding: 0 4px;
    box-sizing: content-box;
    background: #f0f0f0;
    border-left: 1px solid #aaa;
    border-top: 1px solid #aaa;
    fill: none;
    stroke: #555;
    pointer-events: none;
  }

  .place {
    flex: 1;
    height: 18px;
    margin-left: 1px;
    border: 1px solid #adadad;
    background: #e1e1e1;
  }

  .value .file input {
    padding-left: 2px;
  }

  .file button {
    width: 18px;
    flex: none;
    border: 1px solid #adadad;
    background: #e1e1e1;
  }

  input[type='checkbox'] {
    appearance: none;
    box-sizing: border-box;
    flex: none;
    position: relative;
    width: 13px;
    height: 13px;
    border: 1px solid #333;
    background: #fff;
  }

  input[type='checkbox']:checked::after {
    content: '';
    position: absolute;
    left: 1px;
    top: 2px;
    width: 8px;
    height: 3px;
    border: 1px solid #222;
    border-width: 0 0 1px 1px;
    transform: rotate(-45deg);
  }

  input[type='checkbox']:disabled {
    border-color: #bbb;
    background: #e0e0e0;
  }

  .osnap {
    display: flex;
    height: 20px;
    align-items: center;
    padding-bottom: 2px;
  }

  .osnap .grip {
    align-self: stretch;
    margin-right: 5px;
  }

  .osnap label {
    display: flex;
    align-items: center;
    gap: 5px;
    margin-right: 6px;
  }

  .status {
    position: relative;
    display: flex;
    height: 19px;
    border-top: 1px solid #9ba5b7;
    font-size: 12px;
    line-height: 19px;
  }

  .cell {
    flex: none;
    box-sizing: border-box;
    border-right: 1px solid #9ba5b7;
    text-align: center;
    white-space: nowrap;
  }

  .cover {
    width: 145px;
  }

  .coord,
  .unit {
    width: 88px;
  }

  .layer {
    display: flex;
    align-items: center;
    width: 173px;
    padding-left: 3px;
  }

  .layer i {
    width: 14px;
    height: 14px;
    margin-right: 2px;
    background: #000;
  }

  .on {
    background: #e3f3fc;
    font-weight: bold;
  }

  .save {
    flex: 1;
    margin-right: 8px;
    padding-left: 3px;
    text-align: left;
  }

  .minimized {
    position: absolute;
    left: 8px;
    bottom: 0;
    display: flex;
    align-items: center;
    justify-content: space-around;
    width: 144px;
    height: 28px;
    background: #fff;
    box-shadow: 0 0 4px #888;
  }

  .minimized svg {
    display: block;
    width: 12px;
    height: 12px;
    fill: none;
    stroke: #999;
  }

  .taskbar {
    position: relative;
    z-index: 1;
    display: flex;
    height: 8px;
    overflow: hidden;
    background: #0c1418;
    color: #fff;
    font: 12px/17px 'Open Sans', sans-serif;
  }

  .search {
    width: 344px;
    margin-left: 48px;
    background: #333;
  }

  .task {
    width: 48px;
    margin-left: 150px;
    background: #42494c;
  }

  time {
    margin: 0 63px 0 auto;
  }
</style>
